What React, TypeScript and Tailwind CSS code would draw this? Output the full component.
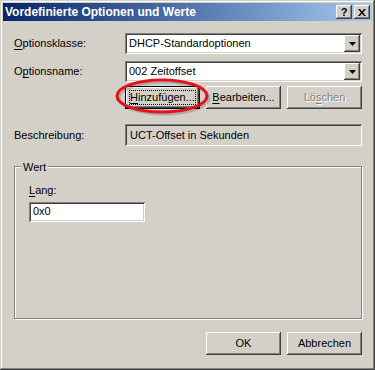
import React from "react";

/* Windows classic 3D edges */
const raised =
  "shadow-[inset_-1px_-1px_0_#404040,inset_1px_1px_0_#ffffff,inset_-2px_-2px_0_#808080,inset_2px_2px_0_#d4d0c8]";
const sunken =
  "shadow-[inset_1px_1px_0_#808080,inset_-1px_-1px_0_#ffffff,inset_2px_2px_0_#404040,inset_-2px_-2px_0_#d4d0c8]";

function U({ children }: { children: React.ReactNode }) {
  return <span className="underline underline-offset-[2px]">{children}</span>;
}

function Combo({ value }: { value: string }) {
  return (
    <div className={`flex h-[21px] w-[237px] items-stretch bg-white p-[2px] ${sunken}`}>
      <div className="flex flex-1 items-center pl-[2px] text-black">{value}</div>
      <div className={`flex w-[16px] items-center justify-center bg-[#d4d0c8] ${raised}`}>
        <svg width="7" height="4" viewBox="0 0 7 4">
          <path d="M0 0h7L3.5 4z" fill="#000" />
        </svg>
      </div>
    </div>
  );
}

function Btn({
  children,
  focused,
  disabled,
}: {
  children: React.ReactNode;
  focused?: boolean;
  disabled?: boolean;
}) {
  if (focused) {
    return (
      <div className="h-[23px] w-[75px] border border-black bg-[#d4d0c8]">
        <div className={`flex h-full w-full items-center justify-center p-[3px] ${raised}`}>
          <span className="flex h-full w-full items-center justify-center border border-dotted border-black">
            {children}
          </span>
        </div>
      </div>
    );
  }
  return (
    <div
      className={`flex h-[23px] w-[75px] items-center justify-center bg-[#d4d0c8] ${raised} ${
        disabled ? "text-[#808080] [text-shadow:1px_1px_0_#ffffff]" : "text-black"
      }`}
    >
      {children}
    </div>
  );
}

export default function App() {
  return (
    <div className="relative h-[370px] w-[375px] overflow-hidden bg-[#d4d0c8] font-['Liberation_Sans',Arial,sans-serif] text-[11px] text-black">
      <div className="flex h-full w-full flex-col p-[3px] shadow-[inset_-1px_-1px_0_#404040,inset_1px_1px_0_#d4d0c8,inset_-2px_-2px_0_#808080,inset_2px_2px_0_#ffffff]">
        {/* title bar */}
        <div className="flex h-[18px] items-center justify-between bg-gradient-to-r from-[#0a246a] to-[#a6caf0] pl-[2px] pr-[2px]">
          <span className="text-[12px] font-bold text-white">Vordefinierte Optionen und Werte</span>
          <div className="flex gap-[2px]">
            <div className={`flex h-[14px] w-[16px] items-center justify-center bg-[#d4d0c8] text-[11px] font-bold leading-none ${raised}`}>
              ?
            </div>
            <div className={`flex h-[14px] w-[16px] items-center justify-center bg-[#d4d0c8] ${raised}`}>
              <svg width="8" height="7" viewBox="0 0 8 7">
                <path d="M0 0h2l2 2.5L6 0h2L5 3.5 8 7H6L4 4.5 2 7H0l3-3.5z" fill="#000" />
              </svg>
            </div>
          </div>
        </div>

        {/* body */}
        <div className="flex flex-1 flex-col pl-[11px] pr-[10px] pt-[12px]">
          <div className="flex items-center justify-between">
            <span>
              <U>O</U>ptionsklasse:
            </span>
            <Combo value="DHCP-Standardoptionen" />
          </div>
          <div className="mt-[7px] flex items-center justify-between">
            <span>
              O<U>p</U>tionsname:
            </span>
            <Combo value="002 Zeitoffset" />
          </div>
          <div className="mt-[4px] flex justify-end gap-[6px]">
            <Btn focused>
              <span>
                <U>H</U>inzufügen...
              </span>
            </Btn>
            <Btn>
              <span>
                <U>B</U>earbeiten...
              </span>
            </Btn>
            <Btn disabled>
              <span>
                Lö<U>s</U>chen
              </span>
            </Btn>
          </div>

          <div className="mt-[15px] flex items-center justify-between">
            <span>Beschreibung:</span>
            <div className={`flex h-[22px] w-[237px] items-start bg-[#d4d0c8] px-[5px] pt-[3px] ${sunken}`}>
              UCT-Offset in Sekunden
            </div>
          </div>

          {/* group box */}
          <div className="relative mt-[20px] h-[153px] border border-[#808080] shadow-[1px_1px_0_#ffffff,inset_1px_1px_0_#ffffff] pl-[14px] pt-[15px]">
            <span className="absolute -top-[8px] left-[6px] bg-[#d4d0c8] px-[2px]">Wert</span>
            <div>
              <U>L</U>ang:
            </div>
            <div className={`mt-[3px] flex h-[20px] w-[116px] items-center bg-white px-[4px] ${sunken}`}>0x0</div>
          </div>

          <div className="mt-[13px] flex justify-end gap-[6px]">
            <Btn>OK</Btn>
            <Btn>Abbrechen</Btn>
          </div>
        </div>
      </div>

      {/* red annotation ellipse */}
      <svg className="absolute left-[114px] top-[77px]" width="100" height="42" viewBox="0 0 100 42">
        <ellipse cx="50" cy="21" rx="45" ry="16" fill="none" stroke="#000" strokeOpacity="0.18" strokeWidth="3" />
        <ellipse cx="48" cy="19" rx="45" ry="16" fill="none" stroke="#e8101a" strokeWidth="3" />
      </svg>
    </div>
  );
}
